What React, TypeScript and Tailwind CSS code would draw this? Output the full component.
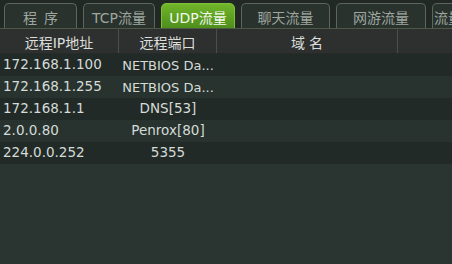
import React from "react";

const tabs = [
  { label: "程序", w: "w-[73px]", spaced: true },
  { label: "TCP流量", w: "w-[72px]" },
  { label: "UDP流量", w: "w-[74px]", active: true },
  { label: "聊天流量", w: "w-[89px]" },
  { label: "网游流量", w: "w-[90px]" },
  { label: "流量统计", w: "w-[60px]" },
];

const rows = [
  ["172.168.1.100", "NETBIOS Da..."],
  ["172.168.1.255", "NETBIOS Da..."],
  ["172.168.1.1", "DNS[53]"],
  ["2.0.0.80", "Penrox[80]"],
  ["224.0.0.252", "5355"],
];

export default function App() {
  return (
    <div
      className="w-[452px] h-[264px] overflow-hidden bg-[#2a3531] text-[14px] leading-none"
      style={{ fontFamily: '"DejaVu Sans", "Noto Sans CJK SC", sans-serif' }}
    >
      <div className="h-[29px] bg-[#222925] flex items-end gap-[6px] pl-[4px] border-b border-[#4d5944] overflow-hidden">
        {tabs.map((t) =>
          t.active ? (
            <div
              key={t.label}
              className={`${t.w} shrink-0 h-[26px] -mb-px rounded-t-[5px] border border-[#7fbf3a] bg-gradient-to-b from-[#70b52a] to-[#4e8f1c] text-[#f2f8ea] flex items-center justify-center pt-[4px]`}
            >
              {t.label}
            </div>
          ) : (
            <div
              key={t.label}
              className={`${t.w} shrink-0 h-[25px] rounded-t-[5px] border border-b-0 border-[#5a665e] bg-[#2a322e] text-[#9ea79f] flex items-center justify-center pt-[4px] whitespace-nowrap overflow-hidden`}
            >
              {t.spaced ? (
                <span className="flex gap-[7px]">
                  <span>程</span>
                  <span>序</span>
                </span>
              ) : (
                t.label
              )}
            </div>
          )
        )}
      </div>
      <div className="h-[25px] bg-[#2d302f] grid grid-cols-[119px_98px_181px_1fr] text-[#dcdedc] border-b border-[#262a28]">
        <div className="border-r border-[#4a4e4c] flex items-center justify-center pt-[3px]">远程IP地址</div>
        <div className="border-r border-[#4a4e4c] flex items-center justify-center pt-[3px]">远程端口</div>
        <div className="border-r border-[#4a4e4c] flex items-center justify-center pt-[3px]">
          <span className="flex gap-[4px]">
            <span>域</span>
            <span>名</span>
          </span>
        </div>
        <div />
      </div>
      <div className="flex flex-col text-[13.5px] text-[#d5dbd7]">
        {rows.map((r, i) => (
          <div
            key={i}
            className={`h-[22px] grid grid-cols-[119px_98px_1fr] items-center ${
              i % 2 === 0 ? "bg-[#212a27]" : "bg-[#28332f]"
            }`}
          >
            <div className="pl-[3px] whitespace-nowrap">{r[0]}</div>
            <div className="flex justify-center whitespace-nowrap">
              <span className={r[1].length > 10 ? "text-[13px]" : ""}>{r[1]}</span>
            </div>
            <div />
          </div>
        ))}
      </div>
    </div>
  );
}
